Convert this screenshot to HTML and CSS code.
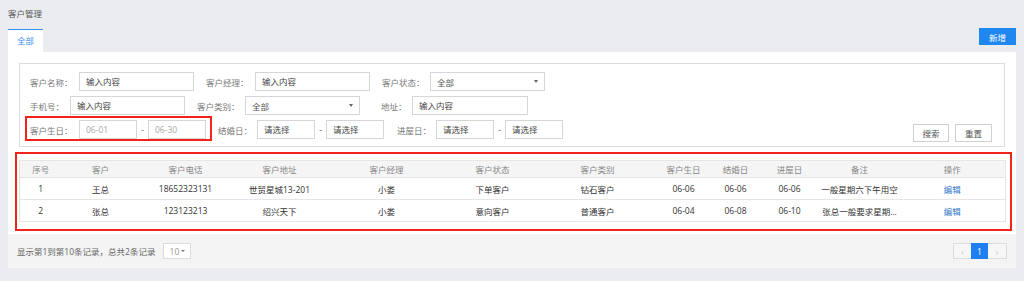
FILE: index.html
```html
<!DOCTYPE html>
<html lang="zh-CN">
<head>
<meta charset="utf-8">
<title>客户管理</title>
<link rel="stylesheet" href="styles.css">
</head>
<body>
<div class="page">
  <div class="title">客户管理</div>
  <div class="tabbar">
    <div class="tab">全部</div>
    <button class="btn-primary">新增</button>
  </div>
  <div class="panel">
    <div class="search">
      <div class="row">
        <div class="field"><span class="lbl lw49">客户名称：</span><input class="ipt" placeholder="输入内容"></div>
        <div class="field"><span class="lbl lw49">客户经理：</span><input class="ipt" placeholder="输入内容"></div>
        <div class="field"><span class="lbl lw48">客户状态：</span><div class="ipt sel">全部</div></div>
      </div>
      <div class="row">
        <div class="field"><span class="lbl lw40">手机号：</span><input class="ipt" placeholder="输入内容"></div>
        <div class="field"><span class="lbl lw48">客户类别：</span><div class="ipt sel">全部</div></div>
        <div class="field field-wide"><span class="lbl lw31">地址：</span><input class="ipt ipt-116" placeholder="输入内容"></div>
      </div>
      <div class="row">
        <div class="field">
          <span class="mark mark-bday"></span>
          <span class="lbl lw49">客户生日：</span><input class="ipt date light" placeholder="06-01"><span class="dash">-</span><input class="ipt date light" placeholder="06-30">
        </div>
        <div class="field"><span class="lbl lw39">结婚日：</span><input class="ipt date" placeholder="请选择"><span class="dash">-</span><input class="ipt date" placeholder="请选择"></div>
        <div class="field field-r3"><span class="lbl lw39">进屋日：</span><input class="ipt date" placeholder="请选择"><span class="dash">-</span><input class="ipt date" placeholder="请选择"></div>
        <div class="btns">
          <button class="btn">搜索</button>
          <button class="btn btn-w37">重置</button>
        </div>
      </div>
    </div>
    <div class="tbl-wrap">
      <span class="mark mark-table"></span>
      <table class="tbl">
        <colgroup>
          <col style="width:42px"><col style="width:78px"><col style="width:92px"><col style="width:96px">
          <col style="width:118px"><col style="width:94px"><col style="width:116px"><col style="width:56px">
          <col style="width:48px"><col style="width:60px"><col style="width:80px"><col style="width:106px">
        </colgroup>
        <thead>
          <tr><th>序号</th><th>客户</th><th>客户电话</th><th>客户地址</th><th>客户经理</th><th>客户状态</th><th>客户类别</th><th>客户生日</th><th>结婚日</th><th>进屋日</th><th>备注</th><th>操作</th></tr>
        </thead>
        <tbody>
          <tr><td>1</td><td>王总</td><td>18652323131</td><td>世贸星城13-201</td><td>小娄</td><td>下单客户</td><td>钻石客户</td><td>06-06</td><td>06-06</td><td>06-06</td><td>一般星期六下午用空</td><td><a class="edit">编辑</a></td></tr>
          <tr><td>2</td><td>张总</td><td>123123213</td><td>绍兴天下</td><td>小娄</td><td>意向客户</td><td>普通客户</td><td>06-04</td><td>06-08</td><td>06-10</td><td>张总一般要求星期...</td><td><a class="edit">编辑</a></td></tr>
        </tbody>
      </table>
    </div>
  </div>
  <div class="footer">
    <div class="info">
      <span>显示第1到第10条记录，总共2条记录</span>
      <div class="psize">10</div>
    </div>
    <div class="pager">
      <span class="pg pg-prev">‹</span>
      <span class="pg pg-active">1</span>
      <span class="pg pg-next">›</span>
    </div>
  </div>
</div>
</body>
</html>
```

FILE: styles.css
```css
* { box-sizing: border-box; }
body {
  margin: 0;
  background: #ebecf0;
  font-family: "Open Sans", "Noto Sans CJK SC", sans-serif;
  font-size: 8.5px;
  color: #333;
}
.page { padding: 0 8px; }
.title {
  height: 28px;
  line-height: 28px;
  color: #555;
}
.tabbar {
  display: flex;
  justify-content: space-between;
  align-items: flex-start;
  height: 24px;
}
.tab {
  margin-top: 1px;
  width: 35px;
  height: 23px;
  line-height: 22px;
  text-align: center;
  background: #fff;
  border-top: 1px solid #3a8ef6;
  color: #3d8ef0;
}
.btn-primary {
  width: 37px;
  height: 17px;
  border: 0;
  padding: 0;
  background: #1e87f0;
  color: #fff;
  font: inherit;
}
.panel {
  background: #fff;
  padding: 11px 11px 12px;
}
.search {
  border: 1px solid #dcdcdc;
  padding: 8px 12px 4px 10px;
  display: flex;
  flex-direction: column;
  gap: 5px;
}
.row {
  display: flex;
  align-items: flex-start;
}
.field {
  display: flex;
  align-items: center;
  margin-right: 12px;
  position: relative;
}
.field-wide { margin-left: 9px; }
.field-r3 { margin-left: 1px; }
.lbl { color: #7a7a7a; flex: none; white-space: nowrap; }
.lw49 { width: 49px; }
.lw48 { width: 48px; }
.lw40 { width: 40px; }
.lw39 { width: 39px; }
.lw31 { width: 31px; }
.ipt {
  width: 115px;
  height: 19px;
  border: 1px solid #d6d6d6;
  padding: 0 6px;
  font: inherit;
  color: #444;
  background: #fff;
  outline: none;
}
.ipt::placeholder { color: #444; opacity: 1; }
.ipt-116 { width: 116px; }
.date { width: 58px; }
.date.light::placeholder { color: #a8a8a8; }
.dash { width: 11px; text-align: center; color: #555; }
.sel {
  display: flex;
  align-items: center;
  justify-content: space-between;
  color: #555;
}
.sel::after {
  content: "";
  border-left: 2.5px solid transparent;
  border-right: 2.5px solid transparent;
  border-top: 3px solid #666;
}
.btns {
  margin-left: auto;
  margin-top: 4px;
  display: flex;
  gap: 6px;
}
.btn {
  width: 36px;
  height: 18px;
  border: 1px solid #cfcfcf;
  background: #fff;
  color: #555;
  font: inherit;
  padding: 0;
}
.btn-w37 { width: 37px; }
.mark {
  position: absolute;
  border: 2px solid #f1231b;
  pointer-events: none;
}
.mark-bday { left: -5px; top: -4px; width: 187px; height: 25px; }
.mark-table { left: -4px; top: -8px; width: 997px; height: 79px; }
.tbl-wrap {
  position: relative;
  margin-top: 13px;
}
.tbl {
  width: 100%;
  border-collapse: collapse;
  table-layout: fixed;
  border: 1px solid #e6e6e6;
}
.tbl th {
  height: 17px;
  padding: 0;
  background: #f5f5f5;
  color: #888;
  font-weight: normal;
  border-bottom: 1px solid #e6e6e6;
}
.tbl td {
  height: 22px;
  padding: 0;
  text-align: center;
  color: #333;
  border-bottom: 1px solid #e6e6e6;
  white-space: nowrap;
}
.edit { color: #3379c8; }
.footer {
  height: 34px;
  background: #f4f4f4;
  display: flex;
  align-items: center;
  justify-content: space-between;
  padding: 0 9px;
}
.info {
  display: flex;
  align-items: center;
  gap: 8px;
  color: #666;
}
.psize {
  width: 28px;
  height: 16px;
  border: 1px solid #dcdcdc;
  background: #fff;
  color: #999;
  display: flex;
  align-items: center;
  justify-content: center;
  gap: 2px;
}
.psize::after {
  content: "";
  border-left: 2px solid transparent;
  border-right: 2px solid transparent;
  border-top: 2.5px solid #777;
}
.pager { display: flex; }
.pg {
  width: 18px;
  height: 16px;
  border: 1px solid #dcdcdc;
  display: flex;
  align-items: center;
  justify-content: center;
  color: #c4c4c4;
  background: #f6f6f6;
}
.pg-prev { border-right: 0; }
.pg-next { width: 19px; border-left: 0; }
.pg-active {
  width: 17px;
  background: #1e80f0;
  border-color: #1e80f0;
  color: #fff;
}
```
